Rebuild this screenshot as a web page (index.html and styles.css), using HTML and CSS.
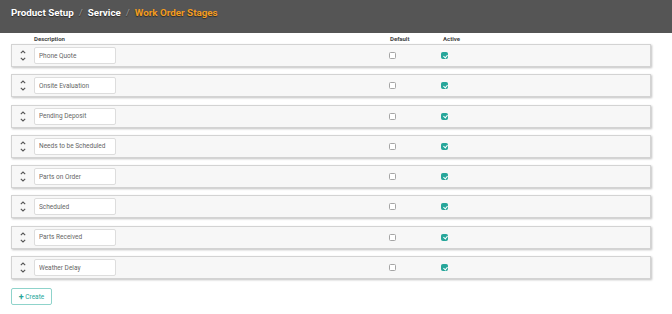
FILE: index.html
```html
<!DOCTYPE html>
<html lang="en">
<head>
    <meta charset="UTF-8">
    <meta name="viewport" content="width=device-width, initial-scale=1.0">
    <title>Work Order Stages - Product Setup</title>
    <link rel="stylesheet" href="styles.css">
</head>
<body>
    <!-- Breadcrumb Bar -->
    <header class="page-header">
        <a class="crumb" href="#">Product Setup</a>
        <span class="crumb-sep">/</span>
        <a class="crumb" href="#">Service</a>
        <span class="crumb-sep">/</span>
        <span class="crumb current">Work Order Stages</span>
    </header>

    <main class="stage-list">
        <div class="stage-head">
            <span></span>
            <span>Description</span>
            <span class="col-default">Default</span>
            <span class="col-active">Active</span>
        </div>

        <div class="stage-row">
            <div class="mover">
                <svg viewBox="0 0 6 4"><polyline points="0.8,3.2 3,1 5.2,3.2"/></svg>
                <svg viewBox="0 0 6 4"><polyline points="0.8,0.8 3,3 5.2,0.8"/></svg>
            </div>
            <div><input type="text" value="Phone Quote"></div>
            <div><input type="checkbox" class="check"></div>
            <div><input type="checkbox" class="check" checked></div>
        </div>

        <div class="stage-row">
            <div class="mover">
                <svg viewBox="0 0 6 4"><polyline points="0.8,3.2 3,1 5.2,3.2"/></svg>
                <svg viewBox="0 0 6 4"><polyline points="0.8,0.8 3,3 5.2,0.8"/></svg>
            </div>
            <div><input type="text" value="Onsite Evaluation"></div>
            <div><input type="checkbox" class="check"></div>
            <div><input type="checkbox" class="check" checked></div>
        </div>

        <div class="stage-row">
            <div class="mover">
                <svg viewBox="0 0 6 4"><polyline points="0.8,3.2 3,1 5.2,3.2"/></svg>
                <svg viewBox="0 0 6 4"><polyline points="0.8,0.8 3,3 5.2,0.8"/></svg>
            </div>
            <div><input type="text" value="Pending Deposit"></div>
            <div><input type="checkbox" class="check"></div>
            <div><input type="checkbox" class="check" checked></div>
        </div>

        <div class="stage-row">
            <div class="mover">
                <svg viewBox="0 0 6 4"><polyline points="0.8,3.2 3,1 5.2,3.2"/></svg>
                <svg viewBox="0 0 6 4"><polyline points="0.8,0.8 3,3 5.2,0.8"/></svg>
            </div>
            <div><input type="text" value="Needs to be Scheduled"></div>
            <div><input type="checkbox" class="check"></div>
            <div><input type="checkbox" class="check" checked></div>
        </div>

        <div class="stage-row">
            <div class="mover">
                <svg viewBox="0 0 6 4"><polyline points="0.8,3.2 3,1 5.2,3.2"/></svg>
                <svg viewBox="0 0 6 4"><polyline points="0.8,0.8 3,3 5.2,0.8"/></svg>
            </div>
            <div><input type="text" value="Parts on Order"></div>
            <div><input type="checkbox" class="check"></div>
            <div><input type="checkbox" class="check" checked></div>
        </div>

        <div class="stage-row">
            <div class="mover">
                <svg viewBox="0 0 6 4"><polyline points="0.8,3.2 3,1 5.2,3.2"/></svg>
                <svg viewBox="0 0 6 4"><polyline points="0.8,0.8 3,3 5.2,0.8"/></svg>
            </div>
            <div><input type="text" value="Scheduled"></div>
            <div><input type="checkbox" class="check"></div>
            <div><input type="checkbox" class="check" checked></div>
        </div>

        <div class="stage-row">
            <div class="mover">
                <svg viewBox="0 0 6 4"><polyline points="0.8,3.2 3,1 5.2,3.2"/></svg>
                <svg viewBox="0 0 6 4"><polyline points="0.8,0.8 3,3 5.2,0.8"/></svg>
            </div>
            <div><input type="text" value="Parts Received"></div>
            <div><input type="checkbox" class="check"></div>
            <div><input type="checkbox" class="check" checked></div>
        </div>

        <div class="stage-row">
            <div class="mover">
                <svg viewBox="0 0 6 4"><polyline points="0.8,3.2 3,1 5.2,3.2"/></svg>
                <svg viewBox="0 0 6 4"><polyline points="0.8,0.8 3,3 5.2,0.8"/></svg>
            </div>
            <div><input type="text" value="Weather Delay"></div>
            <div><input type="checkbox" class="check"></div>
            <div><input type="checkbox" class="check" checked></div>
        </div>

        <!-- Create Button -->
        <button type="button" class="create-btn"><span class="plus">+</span> Create</button>
    </main>
</body>
</html>
```

FILE: styles.css
```css
/* General Styles */
body {
    font-family: Roboto, "Liberation Sans", sans-serif;
    background-color: #fff;
    margin: 0;
    padding: 0;
    color: #333;
}

/* Breadcrumb Bar */
.page-header {
    height: 33px;
    background-color: #555;
    box-sizing: border-box;
    padding: 6px 11px 0;
    font-size: 9.8px;
    font-weight: 700;
    line-height: 13px;
    display: flex;
    align-items: flex-start;
    text-shadow: 0 1px 1px rgba(0, 0, 0, 0.5);
}

.page-header .crumb {
    color: #fff;
    text-decoration: none;
}

.page-header .crumb.current {
    color: #f39c1f;
}

.crumb-sep {
    color: #999;
    font-weight: 400;
    margin: 0 5px;
}

/* Stage List */
.stage-list {
    padding: 0 21px 0 11px;
}

.stage-head,
.stage-row {
    display: grid;
    grid-template-columns: 22px 355px 52px 1fr;
    align-items: center;
}

.stage-head {
    height: 11px;
    padding-left: 1px;
    font-size: 6px;
    font-weight: 700;
    color: #444;
}

.stage-head .col-default {
    padding-left: 1px;
}

.stage-head .col-active {
    padding-left: 2px;
}

.stage-row {
    height: 23px;
    margin-bottom: 7.3px;
    background-color: #f7f7f7;
    border: 1px solid #d3d3d3;
    box-sizing: border-box;
    box-shadow: 1px 1px 2px rgba(0, 0, 0, 0.25);
}

.mover {
    display: flex;
    flex-direction: column;
    align-items: center;
    gap: 3px;
    padding-right: 1px;
}

.mover svg {
    width: 6px;
    height: 4px;
    display: block;
}

.mover polyline {
    fill: none;
    stroke: #555;
    stroke-width: 1.1;
}

.stage-row input[type="text"] {
    display: block;
    width: 82px;
    height: 17px;
    padding: 0 4px;
    font-family: Roboto, "Liberation Sans", sans-serif;
    font-size: 6.5px;
    color: #666;
    background-color: #fff;
    border: 1px solid #ddd;
    border-radius: 2px;
    box-sizing: border-box;
}

.check {
    appearance: none;
    display: block;
    width: 7px;
    height: 7px;
    margin: 0;
    border: 1px solid #a5a5a5;
    border-radius: 1.5px;
    background-color: #fff;
    box-sizing: border-box;
    position: relative;
}

.check:checked {
    border-color: #26a69a;
    background-color: #26a69a;
}

.check:checked::after {
    content: "";
    position: absolute;
    left: 1.5px;
    top: 0.6px;
    width: 2px;
    height: 3px;
    border: solid #fff;
    border-width: 0 1px 1px 0;
    transform: rotate(40deg);
}

.create-btn {
    display: block;
    margin-top: 9px;
    width: 41px;
    height: 17px;
    padding: 0;
    font-family: Roboto, "Liberation Sans", sans-serif;
    font-size: 6.5px;
    color: #26a69a;
    background-color: #fff;
    border: 1px solid #8fd3cb;
    border-radius: 2px;
}

.create-btn .plus {
    font-weight: 700;
    font-size: 9px;
    vertical-align: -1px;
}
```
